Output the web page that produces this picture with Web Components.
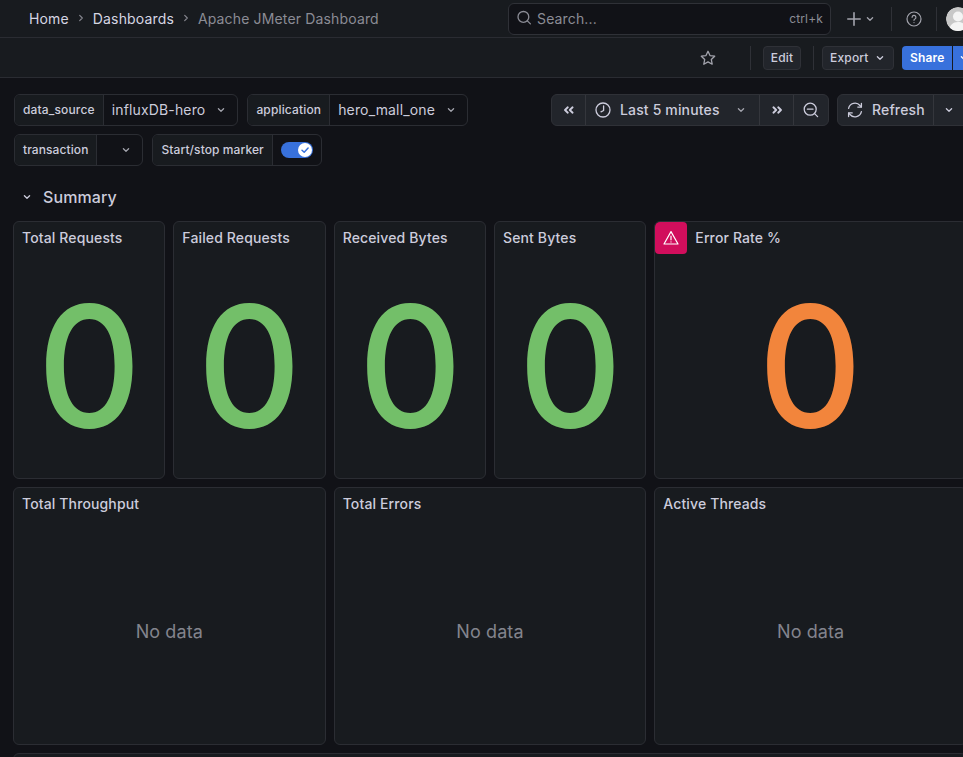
<!DOCTYPE html>
<html lang="en">
<head>
<meta charset="utf-8">
<title>Apache JMeter Dashboard</title>
<style>
    html, body { margin: 0; padding: 0; width: 963px; height: 757px; overflow: hidden; background: #111217; }
    body { font-family: Inter, "Liberation Sans", sans-serif; color: #ccccdc; }
</style>
</head>
<body>
<dash-app></dash-app>

<script>
const icons = {
    chevron: '<svg width="12" height="12" viewBox="0 0 12 12" fill="none" stroke="currentColor" stroke-width="1.3" stroke-linecap="round" stroke-linejoin="round"><path d="M3.4 4.8 6 7.300l2.600-2.500"/></svg>',
    crumb: '<svg width="12" height="12" viewBox="0 0 12 12" fill="none" stroke="currentColor" stroke-width="1.2" stroke-linecap="round" stroke-linejoin="round"><path d="M4.700 3.400 7.300 6l-2.600 2.600"/></svg>',
    search: '<svg width="16" height="16" viewBox="0 0 16 16" fill="none" stroke="currentColor" stroke-width="1.3" stroke-linecap="round"><circle cx="6.400" cy="6.900" r="5.400"/><path d="m10.400 10.900 3 3"/></svg>',
    plus: '<svg width="14" height="14" viewBox="0 0 14 14" fill="none" stroke="currentColor" stroke-width="1.6" stroke-linecap="round"><path d="M7 .8v12.400M.8 7h12.400"/></svg>',
    help: '<svg width="16" height="16" viewBox="0 0 16 16" fill="none" stroke="currentColor" stroke-width="1.2" stroke-linecap="round"><circle cx="8" cy="8" r="7"/><path d="M6.100 6.300a1.900 1.900 0 1 1 2.800 1.700c-.6.3-.9.7-.9 1.300"/><path d="M8 11.500v.1"/></svg>',
    star: '<svg width="16" height="16" viewBox="0 0 16 16" fill="none" stroke="currentColor" stroke-width="1.300" stroke-linejoin="round"><path d="m8 1.300 2 4.300 4.700.6-3.400 3.300.9 4.700L8 11.900l-4.200 2.300.9-4.700L1.300 6.200 6 5.600z"/></svg>',
    clock: '<svg width="16" height="16" viewBox="0 0 16 16" fill="none" stroke="currentColor" stroke-width="1.300" stroke-linecap="round" stroke-linejoin="round"><circle cx="8" cy="8" r="7"/><path d="M8.600 4v4.500L6 9.800"/></svg>',
    backward: '<svg width="14" height="14" viewBox="0 0 14 14" fill="none" stroke="currentColor" stroke-width="1.900" stroke-linecap="round" stroke-linejoin="round"><path d="M5.800 4.300 3 7l2.800 2.700M10.600 4.300 7.800 7l2.800 2.700"/></svg>',
    forward: '<svg width="14" height="14" viewBox="0 0 14 14" fill="none" stroke="currentColor" stroke-width="1.900" stroke-linecap="round" stroke-linejoin="round"><path d="M3.400 4.300 6.200 7 3.400 9.700M8.200 4.300 11 7 8.200 9.700"/></svg>',
    zoomOut: '<svg width="16" height="16" viewBox="0 0 16 16" fill="none" stroke="currentColor" stroke-width="1.300" stroke-linecap="round"><circle cx="7.200" cy="7.200" r="6"/><path d="M4.400 7.200h5.600M11.600 11.600l3 3"/></svg>',
    sync: '<svg width="16" height="16" viewBox="0 0 16 16" fill="none" stroke="currentColor" stroke-width="1.300" stroke-linecap="round" stroke-linejoin="round"><path d="M1.600 6.400A6.600 6.600 0 0 1 13 3.500l1.300 1.400M14.400 9.600A6.600 6.600 0 0 1 3 12.500l-1.300-1.400"/><path d="M14.400 1.500v3.600h-3.600M1.600 14.500v-3.600h3.600"/></svg>',
    alert: '<svg width="16" height="16" viewBox="0 0 16 16" fill="none" stroke="#fff" stroke-width="1.200" stroke-linecap="round" stroke-linejoin="round"><path d="M8 1.600 15 14H1z"/><path d="M8 6v3.800M8 11.900v.1"/></svg>'
};

class DashApp extends HTMLElement {
    constructor() {
        super()
        this.shadow = this.attachShadow({ mode: 'open' })
    }

    connectedCallback() {
        this.render()
    }

    render() {
        this.shadow.innerHTML =
            /*html*/`
            <style>
                :host{
                    display:block;
                    width:985px;
                    height:757px;
                    overflow:hidden;
                }
            </style>
            <top-bar></top-bar>
            <action-bar></action-bar>
            <sub-menu></sub-menu>
            <row-header>Summary</row-header>
            <panel-grid>
                <stat-panel heading="Total Requests" value="0"></stat-panel>
                <stat-panel heading="Failed Requests" value="0"></stat-panel>
                <stat-panel heading="Received Bytes" value="0"></stat-panel>
                <stat-panel heading="Sent Bytes" value="0"></stat-panel>
                <stat-panel heading="Error Rate %" value="0" alert style="grid-column: span 2"></stat-panel>
                <stat-panel heading="Total Throughput" empty style="grid-column: span 2"></stat-panel>
                <stat-panel heading="Total Errors" empty style="grid-column: span 2"></stat-panel>
                <stat-panel heading="Active Threads" empty style="grid-column: span 2"></stat-panel>
                <stat-panel style="grid-column: span 6"></stat-panel>
            </panel-grid>
            `
    }
}

class TopBar extends HTMLElement {
    constructor() {
        super()
        this.shadow = this.attachShadow({ mode: 'open' })
    }

    connectedCallback() {
        this.render()
    }

    render() {
        this.shadow.innerHTML =
            /*html*/`
            <style>
                :host{
                    display:flex;
                    align-items:center;
                    height:37px;
                    padding:0 15px 0 29px;
                    background:#181b1f;
                    border-bottom:1px solid #2a2c32;
                    font-size:14px;
                    letter-spacing:.15px;
                }
                .crumbs{
                    display:flex;
                    align-items:center;
                    flex:1;
                    padding-bottom:1px;
                    color:#d6d6e3;
                }
                .crumbs svg{
                    margin:0 6px;
                    color:#85868e;
                }
                .current{
                    color:#8b8c95;
                }
                .search{
                    display:flex;
                    align-items:center;
                    box-sizing:border-box;
                    width:323px;
                    height:32px;
                    padding:0 7px 1px 8px;
                    background:#111217;
                    border:1px solid #2f3137;
                    border-radius:6px;
                    color:#8b8c95;
                }
                .search span{
                    flex:1;
                    margin-left:4px;
                }
                .search small{
                    font-size:12px;
                }
                .actions{
                    display:flex;
                    align-items:center;
                    color:#a3a4ad;
                }
                .plus{
                    display:flex;
                    align-items:center;
                    margin:0 15px 0 16px;
                    gap:3px;
                }
                .divider{
                    width:1px;
                    height:24px;
                    background:#2f3137;
                }
                .help{
                    display:flex;
                    margin:0 14px;
                }
                .avatar{
                    width:24px;
                    height:24px;
                    margin-left:9px;
                    border-radius:50%;
                    overflow:hidden;
                }
            </style>
            <div class="crumbs">
                <span>Home</span>${icons.crumb}<span>Dashboards</span>${icons.crumb}<span class="current">Apache JMeter Dashboard</span>
            </div>
            <div class="search">${icons.search}<span>Search...</span><small>ctrl+k</small></div>
            <div class="actions">
                <div class="plus">${icons.plus}${icons.chevron}</div>
                <div class="divider"></div>
                <div class="help">${icons.help}</div>
                <div class="divider"></div>
                <div class="avatar">
                    <svg width="24" height="24" viewBox="0 0 24 24"><circle cx="12" cy="12" r="12" fill="#c8c8c8"/><circle cx="12" cy="9.500" r="5" fill="#f4f4f4"/><path d="M3 24c.5-6 4-9 9-9s8.500 3 9 9z" fill="#f4f4f4"/></svg>
                </div>
            </div>
            `
    }
}

class ActionBar extends HTMLElement {
    constructor() {
        super()
        this.shadow = this.attachShadow({ mode: 'open' })
    }

    connectedCallback() {
        this.render()
    }

    render() {
        this.shadow.innerHTML =
            /*html*/`
            <style>
                :host{
                    display:flex;
                    align-items:center;
                    justify-content:flex-end;
                    height:39px;
                    padding:0 8px 0 0;
                    background:#181b1f;
                    border-bottom:1px solid #2a2c32;
                    font-size:12px;
                    font-weight:500;
                    letter-spacing:.18px;
                }
                .star{
                    display:flex;
                    margin-right:34px;
                    color:#a3a4ad;
                }
                .divider{
                    width:1px;
                    height:24px;
                    background:#2f3137;
                }
                .btn{
                    display:flex;
                    align-items:center;
                    box-sizing:border-box;
                    height:24px;
                    padding:0 7px;
                    background:#22252b;
                    border:1px solid #2f3137;
                    border-radius:4px;
                    color:#ccccdc;
                }
                .edit{
                    width:38px;
                    justify-content:center;
                    padding:0;
                    margin:0 12px;
                }
                .export{
                    gap:5px;
                    width:72px;
                    margin:0 8px 0 8px;
                }
                .share{
                    display:flex;
                    height:24px;
                    background:#3871dc;
                    border-radius:4px;
                    color:#fff;
                    font-weight:600;
                }
                .share span{
                    display:flex;
                    align-items:center;
                    box-sizing:border-box;
                    width:50px;
                    padding-left:8px;
                }
                .share i{
                    display:flex;
                    align-items:center;
                    box-sizing:border-box;
                    width:25px;
                    padding-left:5px;
                    border-left:1px solid #181b1f;
                }
            </style>
            <div class="star">${icons.star}</div>
            <div class="divider"></div>
            <div class="btn edit">Edit</div>
            <div class="divider"></div>
            <div class="btn export">Export ${icons.chevron}</div>
            <div class="share"><span>Share</span><i>${icons.chevron}</i></div>
            `
    }
}

class SubMenu extends HTMLElement {
    constructor() {
        super()
        this.shadow = this.attachShadow({ mode: 'open' })
    }

    connectedCallback() {
        this.render()
    }

    render() {
        this.shadow.innerHTML =
            /*html*/`
            <style>
                :host{
                    display:flex;
                    justify-content:space-between;
                    align-items:flex-start;
                    padding:16px 15px 0 14px;
                }
                .vars{
                    display:flex;
                    flex-direction:column;
                    gap:8px;
                }
                .line{
                    display:flex;
                    gap:9px;
                }
                .line.tight{
                    --label-track:.09px;
                }
            </style>
            <div class="vars">
                <div class="line">
                    <var-picker label="data_source">influxDB-hero</var-picker>
                    <var-picker label="application">hero_mall_one</var-picker>
                </div>
                <div class="line tight">
                    <var-picker label="transaction"></var-picker>
                    <var-picker label="Start/stop marker" toggle></var-picker>
                </div>
            </div>
            <time-controls></time-controls>
            `
    }
}

class VarPicker extends HTMLElement {
    constructor() {
        super()
        this.shadow = this.attachShadow({ mode: 'open' })
    }

    connectedCallback() {
        this.render()
    }

    render() {
        const control = this.hasAttribute('toggle')
            ? /*html*/`<div class="toggle"><b><svg viewBox="0 0 14 14" fill="none" stroke="#3871dc" stroke-width="1.500" stroke-linecap="round" stroke-linejoin="round"><path d="m4 7.200 2.200 2.100 3.900-4.300"/></svg></b></div>`
            : /*html*/`<div class="value"><slot></slot>${icons.chevron}</div>`;
        this.shadow.innerHTML =
            /*html*/`
            <style>
                :host{
                    display:flex;
                    box-sizing:border-box;
                    height:32px;
                    background:#111217;
                    border:1px solid #2b2d33;
                    border-radius:6px;
                    overflow:hidden;
                    white-space:nowrap;
                }
                .label{
                    display:flex;
                    align-items:center;
                    padding:0 8px 1px;
                    background:#181b1f;
                    border-right:1px solid #2b2d33;
                    font-size:12px;
                    font-weight:500;
                    letter-spacing:var(--label-track, .15px);
                    color:#ccccdc;
                }
                .value{
                    display:flex;
                    align-items:center;
                    justify-content:flex-end;
                    box-sizing:border-box;
                    min-width:45px;
                    gap:10px;
                    padding:0 10px 1px 8px;
                    font-size:14px;
                    letter-spacing:.15px;
                    color:#ccccdc;
                }
                .value svg{
                    color:#a3a4ad;
                }
                .toggle{
                    display:flex;
                    align-items:center;
                    padding:0 8px;
                }
                .toggle b{
                    display:flex;
                    align-items:center;
                    justify-content:flex-end;
                    box-sizing:border-box;
                    width:32px;
                    height:16px;
                    padding-right:1px;
                    background:#3871dc;
                    border-radius:8px;
                }
                .toggle svg{
                    width:14px;
                    height:14px;
                    background:#fff;
                    border-radius:50%;
                }
            </style>
            <div class="label">${this.getAttribute('label')}</div>
            ${control}
            `
    }
}

class TimeControls extends HTMLElement {
    constructor() {
        super()
        this.shadow = this.attachShadow({ mode: 'open' })
    }

    connectedCallback() {
        this.render()
    }

    render() {
        this.shadow.innerHTML =
            /*html*/`
            <style>
                :host{
                    display:flex;
                    gap:8px;
                    font-size:14px;
                    font-weight:500;
                    letter-spacing:.15px;
                    color:#ccccdc;
                }
                .group{
                    display:flex;
                    box-sizing:border-box;
                    height:32px;
                    background:#22252b;
                    border:1px solid #2f3137;
                    border-radius:6px;
                }
                .group div{
                    display:flex;
                    align-items:center;
                    justify-content:center;
                    box-sizing:border-box;
                    padding-bottom:1px;
                    border-left:1px solid #34363c;
                }
                .group div:first-child{
                    border-left:none;
                }
                .back{
                    width:33px;
                }
                .arrow{
                    width:34px;
                }
                .group .range{
                    justify-content:flex-start;
                    width:174px;
                    gap:9px;
                    padding-left:9px;
                }
                .range svg:last-child{
                    margin-left:6px;
                    color:#a3a4ad;
                }
                .zoom{
                    width:35px;
                }
                .group .refresh{
                    justify-content:flex-start;
                    width:95px;
                    gap:9px;
                    padding-left:9px;
                }
                .group .more{
                    justify-content:flex-start;
                    width:36px;
                    padding-left:9px;
                }
            </style>
            <div class="group">
                <div class="back">${icons.backward}</div>
                <div class="range">${icons.clock}<span>Last 5 minutes</span>${icons.chevron}</div>
                <div class="arrow">${icons.forward}</div>
                <div class="zoom">${icons.zoomOut}</div>
            </div>
            <div class="group">
                <div class="refresh">${icons.sync}<span>Refresh</span></div>
                <div class="more">${icons.chevron}</div>
            </div>
            `
    }
}

class RowHeader extends HTMLElement {
    constructor() {
        super()
        this.shadow = this.attachShadow({ mode: 'open' })
    }

    connectedCallback() {
        this.render()
    }

    render() {
        this.shadow.innerHTML =
            /*html*/`
            <style>
                :host{
                    display:flex;
                    align-items:center;
                    gap:10px;
                    height:32px;
                    margin:15px 0 8px 0;
                    padding-left:21px;
                    font-size:16px;
                    font-weight:500;
                    letter-spacing:.1px;
                    color:#ccccdc;
                }
            </style>
            ${icons.chevron}<slot></slot>
            `
    }
}

class PanelGrid extends HTMLElement {
    constructor() {
        super()
        this.shadow = this.attachShadow({ mode: 'open' })
    }

    connectedCallback() {
        this.render()
    }

    render() {
        this.shadow.innerHTML =
            /*html*/`
            <style>
                :host{
                    display:grid;
                    grid-template-columns:repeat(6, 152.33px);
                    grid-auto-rows:258px;
                    gap:8px;
                    padding-left:13px;
                }
            </style>
            <slot></slot>
            `
    }
}

class StatPanel extends HTMLElement {
    constructor() {
        super()
        this.shadow = this.attachShadow({ mode: 'open' })
    }

    connectedCallback() {
        this.render()
    }

    render() {
        const value = this.getAttribute('value');
        const alert = this.hasAttribute('alert');
        const heading = this.getAttribute('heading') || '';
        let body = '';
        if (value !== null) {
            body = /*html*/`<div class="big ${alert ? 'warn' : ''}">${value}</div>`;
        } else if (this.hasAttribute('empty')) {
            body = /*html*/`<div class="none">No data</div>`;
        }
        this.shadow.innerHTML =
            /*html*/`
            <style>
                :host{
                    display:flex;
                    flex-direction:column;
                    box-sizing:border-box;
                    min-width:0;
                    background:#181b1f;
                    border:1px solid #2b2d33;
                    border-radius:6px;
                    overflow:hidden;
                }
                .head{
                    display:flex;
                    align-items:center;
                    gap:8px;
                    height:32px;
                    padding-left:8px;
                    font-size:14px;
                    font-weight:500;
                    letter-spacing:.13px;
                    color:#ccccdc;
                }
                .head span{
                    margin-top:-2px;
                }
                .head.alert{
                    padding-left:0;
                }
                .badge{
                    display:flex;
                    align-items:center;
                    justify-content:center;
                    width:32px;
                    height:32px;
                    background:#d10e5c;
                    border-radius:4px;
                }
                .body{
                    flex:1;
                    display:flex;
                    align-items:center;
                    justify-content:center;
                }
                .big{
                    font-size:168px;
                    font-weight:500;
                    line-height:1;
                    transform:scaleX(.96);
                    color:#73bf69;
                }
                .big.warn{
                    color:#f2853c;
                }
                .none{
                    margin-top:-2px;
                    font-size:18px;
                    letter-spacing:.1px;
                    color:#83848d;
                }
            </style>
            <div class="head ${alert ? 'alert' : ''}">
                ${alert ? `<div class="badge">${icons.alert}</div>` : ''}<span>${heading}</span>
            </div>
            <div class="body">${body}</div>
            `
    }
}

customElements.define('dash-app', DashApp);
customElements.define('top-bar', TopBar);
customElements.define('action-bar', ActionBar);
customElements.define('sub-menu', SubMenu);
customElements.define('var-picker', VarPicker);
customElements.define('time-controls', TimeControls);
customElements.define('row-header', RowHeader);
customElements.define('panel-grid', PanelGrid);
customElements.define('stat-panel', StatPanel);
</script>
</body>
</html>
